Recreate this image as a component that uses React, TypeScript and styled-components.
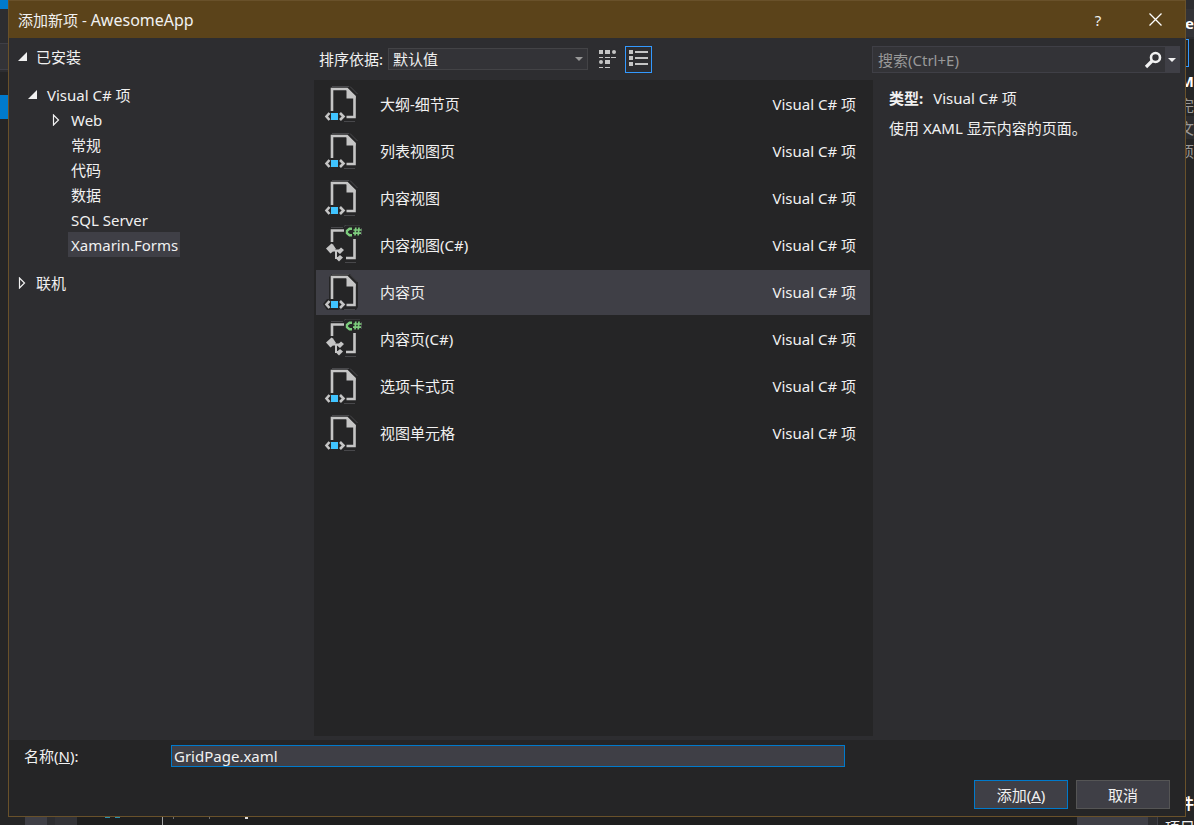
import React from "react";
import styled, { createGlobalStyle } from "styled-components";

const Global = createGlobalStyle`
  * { box-sizing: border-box; }
  body {
    margin: 0;
    background: #1e1e1e;
    color: #f1f1f1;
    font-family: "Noto Sans", "Noto Sans CJK SC", sans-serif;
    font-size: 15px;
    line-height: 20px;
  }
  button, input, select { font: inherit; color: inherit; }
  ul { list-style: none; margin: 0; padding: 0; }
`;

const Desktop = styled.div`
  display: grid;
  grid-template-columns: 8px minmax(0, 1fr) 8px;
  grid-template-rows: minmax(0, 1fr) 8px;
  height: 100vh;
  overflow: hidden;
`;

const EdgeStrip = styled.div`
  display: flex;
  flex-direction: column;
  overflow: hidden;
  background: #252526;
`;

const Block = styled.div<{ $h: number; $bg?: string; $line?: boolean }>`
  flex: none;
  height: ${(p) => p.$h}px;
  background: ${(p) => p.$bg ?? "transparent"};
  border-bottom: ${(p) => (p.$line ? "1px solid #3f3f46" : "none")};
`;

const Clipped = styled.div<{ $h: number; $bg?: string; $dim?: boolean; $bold?: boolean }>`
  flex: none;
  display: flex;
  justify-content: flex-end;
  align-items: center;
  height: ${(p) => p.$h}px;
  overflow: hidden;
  white-space: nowrap;
  background: ${(p) => p.$bg ?? "transparent"};
  color: ${(p) => (p.$dim ? "#999999" : "#ffffff")};
  font-weight: ${(p) => (p.$bold ? 700 : 400)};
`;

const FocusEdge = styled.div`
  flex: none;
  width: 3px;
  height: 28px;
  border: 1px solid #3399ff;
  border-left: none;
`;

const Spacer = styled.div`
  flex: 1;
`;

const BottomStrip = styled.div`
  grid-column: 1 / -1;
  display: flex;
  overflow: hidden;
  background: #1e1e1e;
`;

const Segment = styled.div<{ $w: number; $h?: number; $bg?: string }>`
  flex: none;
  width: ${(p) => p.$w}px;
  height: ${(p) => p.$h ?? 8}px;
  background: ${(p) => p.$bg ?? "transparent"};
`;

const PanelCaption = styled.div`
  flex: none;
  width: 37px;
  padding-left: 7px;
  border-left: 1px solid #3f3f46;
  background: #252526;
  white-space: nowrap;
`;

const Dialog = styled.main`
  display: flex;
  flex-direction: column;
  min-width: 0;
  border: 1px solid #69512a;
  background: #2d2d30;
`;

const TitleBar = styled.header`
  display: flex;
  align-items: center;
  flex: none;
  height: 37px;
  padding: 0 7px 0 9px;
  background: #5b431a;
`;

const Title = styled.h1`
  flex: 1;
  margin: 0;
  font-size: 15px;
  font-weight: 400;
`;

const ProductName = styled.span`
  font-size: 16px;
`;

const CaptionButton = styled.button`
  display: grid;
  place-items: center;
  width: 46px;
  height: 35px;
  margin-left: 11px;
  padding: 0;
  border: 0;
  background: none;
`;

const Body = styled.div`
  display: grid;
  grid-template-columns: 305px minmax(0, 1fr) 312px;
  flex: 1;
  min-height: 0;
  padding-bottom: 4px;
`;

const Tree = styled.nav`
  padding: 8px 8px;
`;

const TreeRow = styled.div<{ $indent: number; $h?: number }>`
  display: flex;
  align-items: center;
  height: ${(p) => p.$h ?? 25}px;
  padding-left: ${(p) => p.$indent}px;
`;

const TreeLabel = styled.span<{ $selected?: boolean }>`
  display: inline-block;
  padding: 1px 2px 0 3px;
  line-height: 24px;
  background: ${(p) => (p.$selected ? "#3f3f46" : "transparent")};
`;

const ArrowSlot = styled.span<{ $w: number }>`
  display: flex;
  flex: none;
  width: ${(p) => p.$w}px;
`;

const Center = styled.section`
  display: flex;
  flex-direction: column;
  min-width: 0;
`;

const Toolbar = styled.div`
  display: flex;
  align-items: center;
  flex: none;
  height: 42px;
  padding-left: 5px;
`;

const SortLabel = styled.label`
  width: 69px;
  white-space: nowrap;
`;

const SelectBox = styled.div`
  display: grid;
  width: 200px;
  height: 22px;
  margin-right: 6px;
  border: 1px solid #434346;
  background: #333337;
  & > * { grid-area: 1 / 1; }
  & > svg { place-self: center end; margin-right: 4px; pointer-events: none; }
`;

const Select = styled.select`
  appearance: none;
  width: 100%;
  height: 20px;
  padding: 0 20px 0 4px;
  border: 0;
  outline: 0;
  line-height: 20px;
  background: transparent;
`;

const ViewButton = styled.button<{ $active?: boolean }>`
  display: grid;
  place-items: center;
  width: 27px;
  height: 27px;
  padding: 0;
  margin-right: 4px;
  border: 1px solid ${(p) => (p.$active ? "#3399ff" : "transparent")};
  background: transparent;
`;

const TemplateList = styled.ul`
  display: flex;
  flex-direction: column;
  gap: 2px;
  flex: 1;
  min-height: 0;
  && { padding: 2px 3px 2px 2px; }
  background: #252526;
`;

const TemplateRow = styled.li<{ $selected?: boolean }>`
  display: flex;
  align-items: center;
  height: 45px;
  padding: 0 14px 0 6px;
  background: ${(p) => (p.$selected ? "#3f3f46" : "transparent")};
  & > svg { flex: none; margin-right: 16px; }
  & > span { padding-bottom: 2px; }
`;

const TemplateName = styled.span`
  flex: 1;
`;

const TemplateKind = styled.span`
  flex: none;
`;

const Details = styled.aside`
  padding: 8px 5px 0 0;
`;

const SearchBox = styled.form`
  display: flex;
  height: 27px;
  margin-left: -1px;
  border: 1px solid #3f3f46;
  background: #333337;
`;

const SearchInput = styled.input`
  flex: 1;
  min-width: 0;
  padding: 0 5px;
  border: 0;
  outline: 0;
  background: transparent;
  &::placeholder { color: #999999; opacity: 1; }
`;

const SearchButton = styled.button<{ $w: number; $bg?: string }>`
  display: grid;
  place-items: center;
  width: ${(p) => p.$w}px;
  padding: 0;
  border: 0;
  background: ${(p) => p.$bg ?? "transparent"};
`;

const Info = styled.p`
  margin: 0;
  padding: 5px 0 5px 16px;
`;

const InfoBlock = styled.div`
  padding-top: 10px;
`;

const InfoKey = styled.b`
  margin-right: 10px;
`;

const Footer = styled.form`
  flex: none;
  padding: 5px 15px 7px;
  background: #252526;
`;

const NameRow = styled.div`
  display: flex;
  align-items: center;
  margin-bottom: 13px;
  padding-right: 325px;
`;

const NameLabel = styled.label`
  width: 147px;
`;

const NameInput = styled.input`
  flex: 1;
  min-width: 0;
  height: 22px;
  padding: 0 2px;
  border: 1px solid #007acc;
  outline: 0;
  background: #3f3f46;
`;

const Actions = styled.div`
  display: flex;
  justify-content: flex-end;
  gap: 8px;
`;

const ActionButton = styled.button<{ $primary?: boolean }>`
  width: 94px;
  height: 29px;
  padding: 0;
  border: 1px solid ${(p) => (p.$primary ? "#007acc" : "#555555")};
  background: #3f3f46;
`;

const Expanded = () => (
  <svg width="9" height="9" viewBox="0 0 9 9" aria-hidden="true">
    <path d="M9 0v9H0z" fill="#f1f1f1" />
  </svg>
);

const Collapsed = () => (
  <svg width="8" height="12" viewBox="0 0 8 12" aria-hidden="true">
    <path d="M1.5 1v10L6.500 6z" fill="none" stroke="#f1f1f1" strokeWidth="1.200" />
  </svg>
);

const DownArrow = ({ color }: { color: string }) => (
  <svg width="8" height="4" viewBox="0 0 8 4" aria-hidden="true">
    <path d="M0 0h8L4 4z" fill={color} />
  </svg>
);

const halo = { fill: "none", stroke: "#48484b", strokeWidth: 1 };
const page = { fill: "none", stroke: "#c5c5c5", strokeWidth: 2.6 };

const XamlIcon = () => (
  <svg width="42" height="41" viewBox="0 0 42 41" aria-hidden="true">
    <path d="M7 27V5l3-3h18l8 8v25l-2 3H21l-3-1-2 1H5l-4-6 4-5z" fill="#252526" />
    <path d="M10 2.500h17M28 2.500l7.500 7.500M22 37.500h11" {...halo} />
    <path d="M10 27V5h15l7.500 7.500v20.500h-8" {...page} />
    <path d="M24.500 4v10.500h9V12z" fill="#c5c5c5" />
    <path d="M7.500 29L4.500 32.500l3 3.500M18 29l3.500 3.500L18 36" {...page} />
    <rect x="9" y="29" width="7" height="7" fill="#40c4ff" />
  </svg>
);

const CSharpIcon = () => (
  <svg width="42" height="41" viewBox="0 0 42 41" aria-hidden="true">
    <path d="M9 2.500h12M22 1.500l2-1.500h14M23 37.500h11M39.500 3v7" {...halo} />
    <path d="M10 17V5.500h12M32.500 14v19h-8.500" {...page} />
    <path d="M4 23.500l5.500-5 1.500 1 3 4.500-5.500 4.500z" fill="#c5c5c5" />
    <path d="M11 25.500h7M14 25v8h3" fill="none" stroke="#c5c5c5" strokeWidth="2" />
    <path d="M19 22.500l3 2.500-4 4-3-2.500zM18 30l3 2.500-4 4-3-3z" fill="#c5c5c5" />
    <path d="M30 3.800h-2.500l-2.500 2v2.400l2.500 2H30" fill="none" stroke="#7dcc7d" strokeWidth="2.400" />
    <path d="M33.800 2.500l-.8 8M37 2.500l-.8 8M31.500 5h8M31 8.200h8" fill="none" stroke="#7dcc7d" strokeWidth="1.700" />
  </svg>
);

const templates = [
  { name: "大纲-细节页" },
  { name: "列表视图页" },
  { name: "内容视图" },
  { name: "内容视图(C#)", code: true },
  { name: "内容页", selected: true },
  { name: "内容页(C#)", code: true },
  { name: "选项卡式页" },
  { name: "视图单元格" },
];

const categories = ["常规", "代码", "数据", "SQL Server", "Xamarin.Forms"];

export default function App() {
  return (
    <>
      <Global />
      <Desktop>
        <EdgeStrip>
          <Block $h={9} $bg="#007acc" />
          <Block $h={35} $bg="#2d2d30" $line />
          <Block $h={26} $bg="#333337" $line />
          <Block $h={2} $bg="#2d2d30" />
          <Block $h={23} />
          <Block $h={24} $bg="#007acc" />
        </EdgeStrip>
        <Dialog>
          <TitleBar>
            <Title>
              添加新项 - <ProductName>AwesomeApp</ProductName>
            </Title>
            <CaptionButton aria-label="帮助">?</CaptionButton>
            <CaptionButton aria-label="关闭">
              <svg width="13" height="13" viewBox="0 0 13 13">
                <path d="M.5.5l12 12M12.500.5l-12 12" stroke="#fff" strokeWidth="1.300" />
              </svg>
            </CaptionButton>
          </TitleBar>
          <Body>
            <Tree>
              <TreeRow $indent={1} $h={20}>
                <ArrowSlot $w={15}><Expanded /></ArrowSlot>
                <TreeLabel>已安装</TreeLabel>
              </TreeRow>
              <Block $h={16} />
              <TreeRow $indent={11}>
                <ArrowSlot $w={16}><Expanded /></ArrowSlot>
                <TreeLabel>Visual C# 项</TreeLabel>
              </TreeRow>
              <TreeRow $indent={35}>
                <ArrowSlot $w={16}><Collapsed /></ArrowSlot>
                <TreeLabel>Web</TreeLabel>
              </TreeRow>
              {categories.map((c) => (
                <TreeRow key={c} $indent={51}>
                  <TreeLabel $selected={c === "Xamarin.Forms"}>{c}</TreeLabel>
                </TreeRow>
              ))}
              <Block $h={13} />
              <TreeRow $indent={1}>
                <ArrowSlot $w={15}><Collapsed /></ArrowSlot>
                <TreeLabel>联机</TreeLabel>
              </TreeRow>
            </Tree>
            <Center>
              <Toolbar>
                <SortLabel htmlFor="sort">排序依据:</SortLabel>
                <SelectBox>
                  <Select id="sort"><option>默认值</option></Select>
                  <DownArrow color="#999999" />
                </SelectBox>
                <ViewButton aria-label="小图标">
                  <svg width="17" height="19" viewBox="0 0 17 19" fill="#c5c5c5">
                    <path d="M0 0h4v4H0zM6 0h5v4H6zM6 10h5v4H6zM0 7h4v1H0zM6 7h5v1H6zM12 7h5v1h-5zM0 17h4v1H0zM6 17h5v1H6z" />
                    <circle cx="15" cy="2" r="2" />
                    <circle cx="2" cy="12" r="2" />
                  </svg>
                </ViewButton>
                <ViewButton $active aria-label="列表">
                  <svg width="19" height="19" viewBox="0 0 19 19" fill="#c5c5c5">
                    <path d="M0 0h4v4H0zM0 6h4v4H0zM0 12h4v4H0zM6 1h13v2H6zM6 7h13v2H6zM6 13h13v2H6z" />
                  </svg>
                </ViewButton>
              </Toolbar>
              <TemplateList>
                {templates.map((t) => (
                  <TemplateRow key={t.name} $selected={t.selected}>
                    {t.code ? <CSharpIcon /> : <XamlIcon />}
                    <TemplateName>{t.name}</TemplateName>
                    <TemplateKind>Visual C# 项</TemplateKind>
                  </TemplateRow>
                ))}
              </TemplateList>
            </Center>
            <Details>
              <SearchBox>
                <SearchInput aria-label="搜索" placeholder="搜索(Ctrl+E)" />
                <SearchButton $w={24} type="button" aria-label="开始搜索">
                  <svg width="18" height="18" viewBox="0 0 18 18" fill="none" stroke="#f1f1f1">
                    <circle cx="11.500" cy="6.500" r="4.500" strokeWidth="2.600" />
                    <path d="M8.500 9.500l-6.500 6.500" strokeWidth="3.200" />
                  </svg>
                </SearchButton>
                <SearchButton $w={14} $bg="#3f3f46" type="button" aria-label="搜索选项">
                  <DownArrow color="#f1f1f1" />
                </SearchButton>
              </SearchBox>
              <InfoBlock>
                <Info><InfoKey>类型:</InfoKey>Visual C# 项</Info>
                <Info>使用 XAML 显示内容的页面。</Info>
              </InfoBlock>
            </Details>
          </Body>
          <Footer>
            <NameRow>
              <NameLabel htmlFor="name">名称(<u>N</u>):</NameLabel>
              <NameInput id="name" defaultValue="GridPage.xaml" />
            </NameRow>
            <Actions>
              <ActionButton $primary type="button">添加(<u>A</u>)</ActionButton>
              <ActionButton type="button">取消</ActionButton>
            </Actions>
          </Footer>
        </Dialog>
        <EdgeStrip>
          <Block $h={9} $bg="#2d2d30" />
          <Clipped $h={28} $bg="#333337" $bold>ve</Clipped>
          <Block $h={2} $bg="#2d2d30" />
          <FocusEdge />
          <Block $h={2} />
          <Clipped $h={24} $bold>M</Clipped>
          <Clipped $h={23} $dim>完</Clipped>
          <Clipped $h={23} $bg="#2d2d30" $dim>文</Clipped>
          <Clipped $h={23} $dim>项</Clipped>
          <Spacer />
          <Clipped $h={28} $bold>件</Clipped>
        </EdgeStrip>
        <BottomStrip>
          <Segment $w={25} $bg="#252526" />
          <Segment $w={22} $bg="#3f3f46" />
          <Segment $w={8} $bg="#2d2d30" />
          <Segment $w={22} $bg="#333337" />
          <Segment $w={28} />
          <Segment $w={5} $h={1} $bg="#2b91af" />
          <Segment $w={5} />
          <Segment $w={5} $h={1} $bg="#2b91af" />
          <Segment $w={42} />
          <Segment $w={1} $bg="#a5a5a5" />
          <Segment $w={10} />
          <Segment $w={1} $h={2} $bg="#717171" />
          <Segment $w={35} />
          <Segment $w={1} $h={2} $bg="#717171" />
          <Segment $w={35} />
          <Segment $w={3} $h={2} $bg="#dcdcdc" />
          <Spacer />
          <Segment $w={71} $bg="#3f3f46" />
          <Segment $w={9} $bg="#2d2d30" />
          <PanelCaption>项目</PanelCaption>
        </BottomStrip>
      </Desktop>
    </>
  );
}
